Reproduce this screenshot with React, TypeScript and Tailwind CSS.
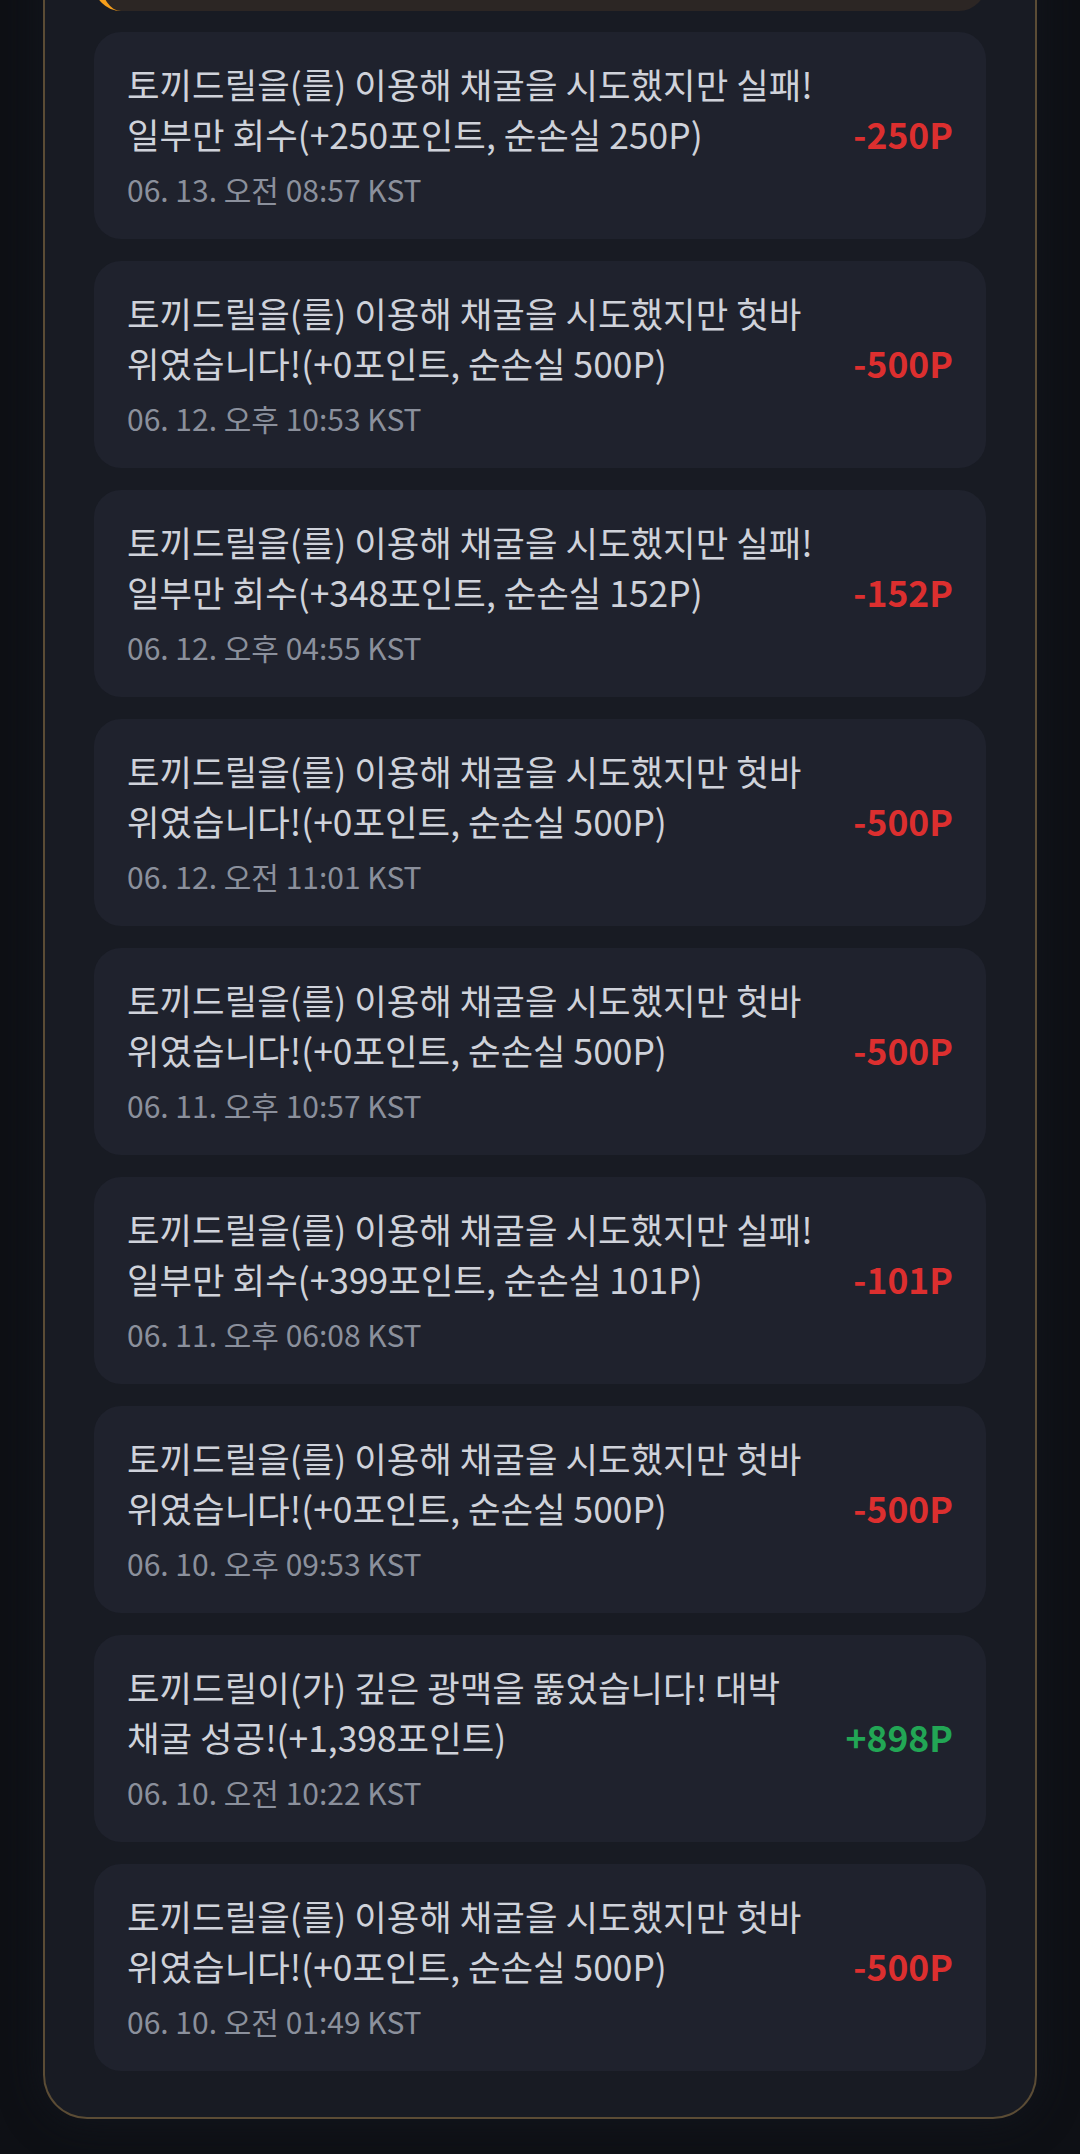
import React from "react";

type Log = { text: string; date: string; amount: number };

const logs: Log[] = [
  { text: "토끼드릴을(를) 이용해 채굴을 시도했지만 실패! 일부만 회수(+250포인트, 순손실 250P)", date: "06. 13. 오전 08:57 KST", amount: -250 },
  { text: "토끼드릴을(를) 이용해 채굴을 시도했지만 헛바위였습니다!(+0포인트, 순손실 500P)", date: "06. 12. 오후 10:53 KST", amount: -500 },
  { text: "토끼드릴을(를) 이용해 채굴을 시도했지만 실패! 일부만 회수(+348포인트, 순손실 152P)", date: "06. 12. 오후 04:55 KST", amount: -152 },
  { text: "토끼드릴을(를) 이용해 채굴을 시도했지만 헛바위였습니다!(+0포인트, 순손실 500P)", date: "06. 12. 오전 11:01 KST", amount: -500 },
  { text: "토끼드릴을(를) 이용해 채굴을 시도했지만 헛바위였습니다!(+0포인트, 순손실 500P)", date: "06. 11. 오후 10:57 KST", amount: -500 },
  { text: "토끼드릴을(를) 이용해 채굴을 시도했지만 실패! 일부만 회수(+399포인트, 순손실 101P)", date: "06. 11. 오후 06:08 KST", amount: -101 },
  { text: "토끼드릴을(를) 이용해 채굴을 시도했지만 헛바위였습니다!(+0포인트, 순손실 500P)", date: "06. 10. 오후 09:53 KST", amount: -500 },
  { text: "토끼드릴이(가) 깊은 광맥을 뚫었습니다! 대박 채굴 성공!(+1,398포인트)", date: "06. 10. 오전 10:22 KST", amount: 898 },
  { text: "토끼드릴을(를) 이용해 채굴을 시도했지만 헛바위였습니다!(+0포인트, 순손실 500P)", date: "06. 10. 오전 01:49 KST", amount: -500 },
];

function formatPoint(value: number) {
  return `${value > 0 ? "+" : "-"}${Math.abs(value).toLocaleString("en-US")}P`;
}

function LogCard({ log }: { log: Log }) {
  return (
    <div className="flex items-center justify-between rounded-[27px] bg-[#1f222d] pl-[33px] pr-[33px] pt-[27px] pb-[30px]">
      <div className="w-[690px]">
        <p className="text-[35.4px] leading-[50px] text-[#cfd2da]">{log.text}</p>
        <p className="mt-[10px] text-[30px] leading-[40px] text-[#8b909c]">{log.date}</p>
      </div>
      <span className={`text-[35.5px] font-bold ${log.amount > 0 ? "text-[#22a655]" : "text-[#dc2f2f]"}`}>{formatPoint(log.amount)}</span>
    </div>
  );
}

export default function App() {
  return (
    <div className="h-[2154px] overflow-hidden bg-[#0e1015] font-['Noto_Sans_CJK_KR','Noto_Sans',sans-serif]">
      <div className="mx-[43px] rounded-b-[44px] border-x-2 border-b-2 border-[#5b4c35] bg-[#181b23] px-[49px] pb-[46px] shadow-[0_0_40px_rgba(20,24,32,0.8)]">
        <div className="-mt-[49px] h-[60px] rounded-[27px] border-l-[8px] border-[#f59e1b] bg-[#2c2624]" />
        <div className="mt-[21px] flex flex-col gap-[22px]">
          {logs.map((log, i) => (
            <LogCard key={i} log={log} />
          ))}
        </div>
      </div>
    </div>
  );
}
